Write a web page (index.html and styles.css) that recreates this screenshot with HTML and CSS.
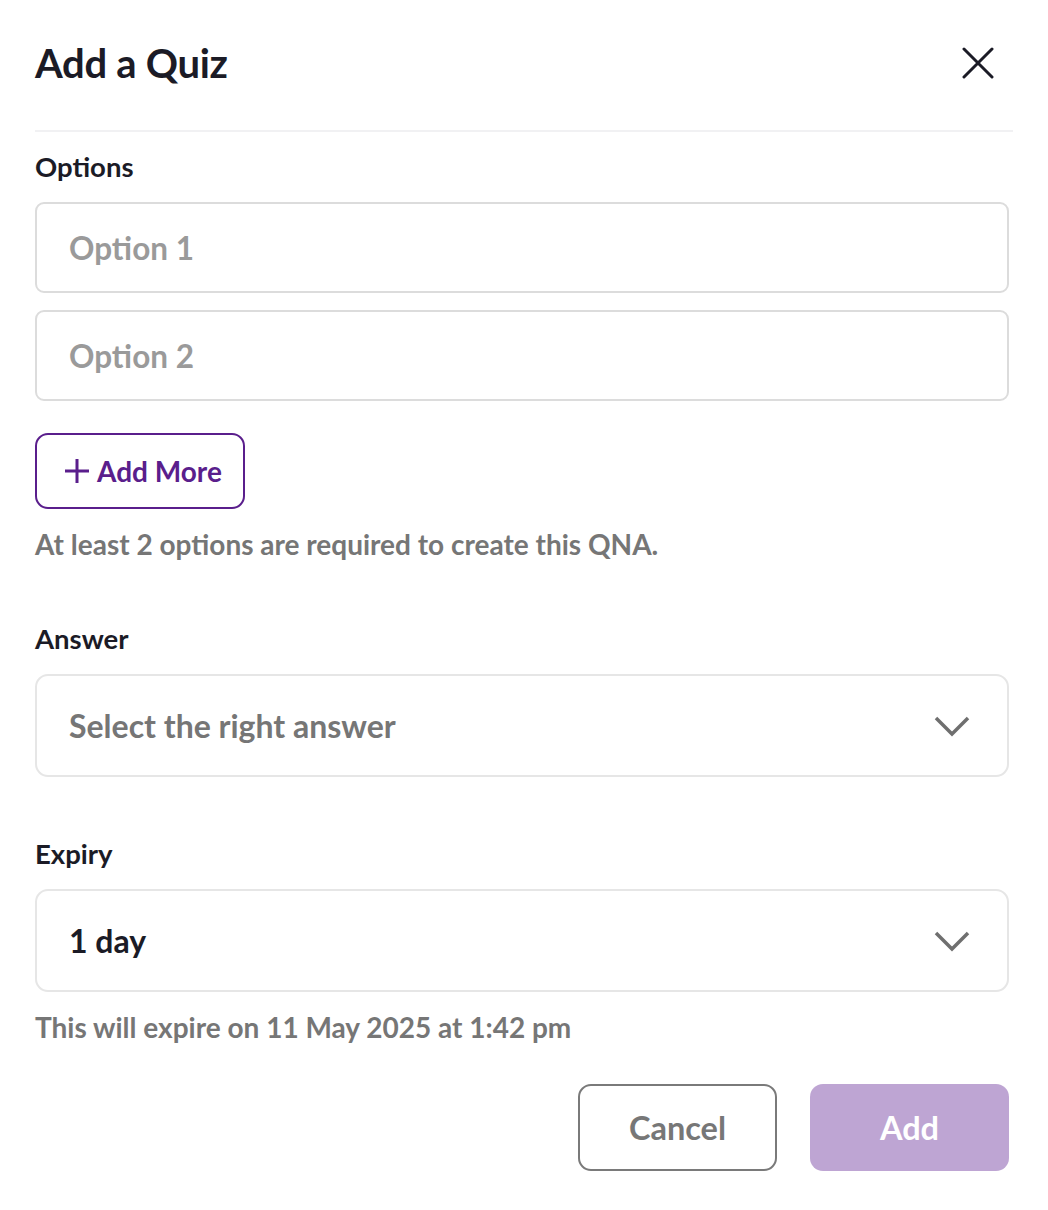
FILE: index.html
```html
<!DOCTYPE html>
<html>
<head>
<meta charset="utf-8">
<link rel="stylesheet" href="styles.css">
</head>
<body>
<div class="modal">
  <div class="header">
    <h1 class="title">Add a Quiz</h1>
    <button class="close" aria-label="Close">
      <svg width="32" height="32" viewBox="0 0 32 32"><path d="M2 2L30 30M30 2L2 30" stroke="#1b1b26" stroke-width="3" stroke-linecap="round" fill="none"/></svg>
    </button>
  </div>
  <div class="divider"></div>
  <div class="section">
    <div class="label">Options</div>
    <div class="input"><span class="placeholder">Option 1</span></div>
    <div class="input"><span class="placeholder">Option 2</span></div>
    <button class="add-more"><svg width="28" height="28" viewBox="0 0 28 28"><path d="M14 2V26M2 14H26" stroke="#5a1e8c" stroke-width="3" fill="none"/></svg><span>Add More</span></button>
    <div class="hint">At least 2 options are required to create this QNA.</div>
  </div>
  <div class="section answer">
    <div class="label">Answer</div>
    <div class="select"><span class="select-text muted">Select the right answer</span>
      <svg class="chev" width="36" height="22" viewBox="0 0 36 22"><path d="M2 3L18 19L34 3" stroke="#6f6f6f" stroke-width="3.5" fill="none"/></svg>
    </div>
  </div>
  <div class="section expiry">
    <div class="label">Expiry</div>
    <div class="select"><span class="select-text dark">1 day</span>
      <svg class="chev" width="36" height="22" viewBox="0 0 36 22"><path d="M2 3L18 19L34 3" stroke="#6f6f6f" stroke-width="3.5" fill="none"/></svg>
    </div>
    <div class="hint">This will expire on 11 May 2025 at 1:42 pm</div>
  </div>
  <div class="actions">
    <button class="btn cancel">Cancel</button>
    <button class="btn add">Add</button>
  </div>
</div>
</body>
</html>
```
FILE: styles.css
```css
* { box-sizing: border-box; }
html, body { margin: 0; padding: 0; background: #fff; }
body { font-family: Lato, "Open Sans", sans-serif; color: #1b1b26; }
.modal { width: 1048px; padding: 0 35px 0 35px; }
.header { display: flex; justify-content: space-between; align-items: center; height: 126px; padding-right: 19px; }
.title { margin: 0; font-size: 40px; font-weight: 700; letter-spacing: -0.3px; color: #1b1b26; }
.close { border: none; background: none; padding: 0; display: flex; }
.divider { height: 2px; background: #f1f1f3; margin-top: 4px; }
.section { display: flex; flex-direction: column; }
.label { font-size: 27.5px; font-weight: 700; margin-top: 20px; line-height: 30px; margin-bottom: 20px; }
.input { height: 91px; border: 2px solid #dcdcdc; border-radius: 9px; display: flex; align-items: center; padding-left: 32px; margin-right: 4px; }
.input + .input { margin-top: 17px; }
.placeholder { font-size: 31.5px; font-weight: 700; color: #9a9a9a; }
.add-more { align-self: flex-start; margin-top: 32px; height: 76px; width: 210px; border: 2px solid #5a1e8c; border-radius: 13px; background: #fff; display: flex; align-items: center; gap: 6px; padding: 0 0 0 26px; font-family: inherit; font-size: 28px; font-weight: 700; color: #5a1e8c; }
.hint { font-size: 28px; font-weight: 700; color: #767676; margin-top: 20px; line-height: 30px; }
.answer .label { margin-top: 65px; }
.expiry .label { margin-top: 62px; }
.select { height: 103px; border: 2px solid #e6e6e6; border-radius: 13px; display: flex; align-items: center; justify-content: space-between; padding: 0 37px 0 32px; margin-right: 4px; }
.select-text { font-size: 32px; font-weight: 700; }
.muted { color: #767676; }
.dark { color: #1b1b26; }
.expiry .hint { margin-top: 20px; }
.actions { display: flex; justify-content: flex-end; gap: 33px; margin-top: 42px; margin-right: 4px; }
.btn { width: 199px; height: 87px; border-radius: 13px; font-family: inherit; font-size: 32.5px; font-weight: 700; }
.cancel { background: #fff; border: 2px solid #7a7a7a; color: #777; }
.add { background: #bea5d3; border: none; color: #fff; }
```
